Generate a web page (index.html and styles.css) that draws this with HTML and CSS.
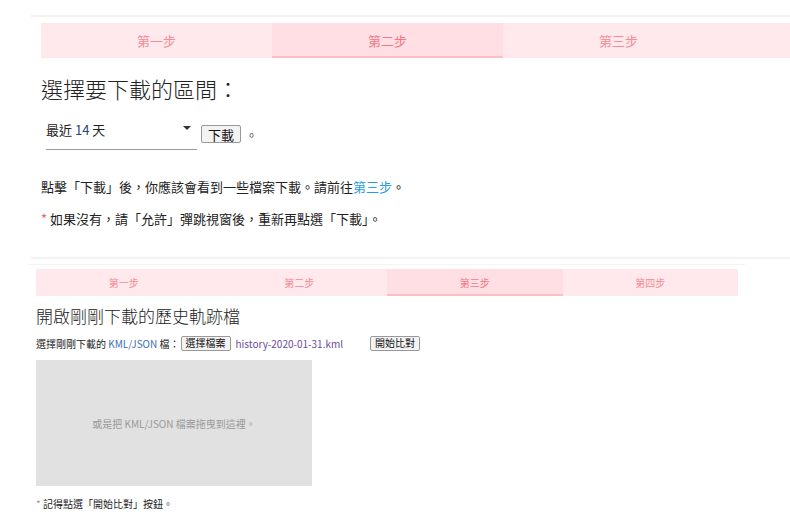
FILE: index.html
```html
<!DOCTYPE html>
<html lang="zh-Hant">
<head>
  <meta charset="UTF-8" />
  <meta name="viewport" content="width=device-width, initial-scale=1.0"/>
  <title>下載歷史軌跡</title>
  <link rel="stylesheet" href="styles.css">
</head>
<body>
  <!-- Step 2: download -->
  <div class="panel">
    <div class="panel-inner">
      <ul class="steps">
        <li>第一步</li>
        <li class="active">第二步</li>
        <li>第三步</li>
      </ul>

      <h2>選擇要下載的區間：</h2>

      <div class="range-row">
        <div class="range-select">
          <span>最近 <span class="num">14</span> 天</span>
          <span class="caret"></span>
        </div>
        <button class="btn">下載</button>
        <span class="dot">。</span>
      </div>

      <p class="note">點擊「下載」後，你應該會看到一些檔案下載。請前往<a href="#">第三步</a>。</p>
      <p class="note"><span class="star">*</span> 如果沒有，請「允許」彈跳視窗後，重新再點選「下載」。</p>
    </div>
  </div>

  <!-- Step 3: compare -->
  <div class="panel small">
    <div class="sub-line"></div>
    <div class="panel-inner">
      <ul class="steps four">
        <li>第一步</li>
        <li>第二步</li>
        <li class="active">第三步</li>
        <li>第四步</li>
      </ul>

      <h3>開啟剛剛下載的歷史軌跡檔</h3>

      <div class="file-row">
        <span>選擇剛剛下載的 <span class="fmt">KML/JSON</span> 檔：</span>
        <button class="btn sm">選擇檔案</button>
        <span class="filename">history-2020-01-31.kml</span>
        <button class="btn sm compare">開始比對</button>
      </div>

      <div class="dropzone">或是把 KML/JSON 檔案拖曳到這裡。</div>

      <p class="note sm"><span class="star grey">*</span> 記得點選「開始比對」按鈕。</p>
    </div>
  </div>
</body>
</html>
```

FILE: styles.css
```css
body {
  margin: 0;
  font-family: "Noto Sans CJK TC", "Noto Sans", sans-serif;
  color: #222;
  overflow: hidden;
}

.panel {
  margin-top: 15px;
  margin-left: 31px;
  border-top: 2px solid #f3f3f3;
}

.panel-inner {
  padding: 6px 0 0 10px;
}

.steps {
  list-style: none;
  margin: 0;
  padding: 0;
  display: flex;
  width: 770px;
  height: 35px;
  background: #ffe9ec;
}

.steps li {
  width: 30%;
  flex: none;
  text-align: center;
  line-height: 35px;
  font-size: 13px;
  color: #f78a94;
  box-sizing: border-box;
}

.steps li.active {
  background: #ffdfe3;
  border-bottom: 2px solid #fcbfc4;
  color: #f37884;
}

h2 {
  font-size: 22px;
  font-weight: 300;
  margin: 13px 0 0;
  line-height: 34px;
  color: #222;
}

.range-row {
  display: flex;
  align-items: center;
  margin-top: 13px;
  height: 32px;
}

.range-select {
  width: 151px;
  margin-left: 5px;
  height: 31px;
  padding-top: 3px;
  box-sizing: border-box;
  border-bottom: 1px solid #999;
  font-size: 13px;
  line-height: 18px;
  display: flex;
  justify-content: space-between;
  align-items: flex-start;
  align-self: flex-start;
  height: 32px;
}

.range-select .num {
  color: #24427a;
}

.caret {
  width: 0;
  height: 0;
  border-left: 4px solid transparent;
  border-right: 4px solid transparent;
  border-top: 4px solid #333;
  margin-right: 6px;
  margin-top: 5px;
}

.btn {
  font-family: inherit;
  font-size: 13px;
  line-height: 15px;
  padding: 0 6px;
  margin-left: 4px;
  height: 18px;
  background: #f3f3f3;
  border: 1px solid #999;
  border-radius: 2px;
  color: #111;
}

.dot {
  font-size: 13px;
  margin-left: 4px;
  color: #555;
}

.note {
  font-size: 13px;
  margin: 27px 0 0;
  line-height: 20px;
}

.note + .note {
  margin-top: 12px;
}

.note a {
  color: #2b9be0;
  text-decoration: none;
}

.star {
  color: #e8626e;
}

.star.grey {
  color: #999;
}

/* second panel is drawn at a smaller scale */
.panel.small {
  margin-top: 28px;
  margin-left: 31px;
  border-top: 2px solid #f3f3f3;
}

.sub-line {
  margin-top: 5px;
  margin-left: -3px;
  width: 717px;
  border-top: 1px solid #f4f4f4;
}

.panel.small .panel-inner {
  padding: 4px 0 0 5px;
}

.steps.four {
  width: 702px;
  height: 27px;
}

.steps.four li {
  width: 25%;
  line-height: 27px;
  font-size: 10px;
}

h3 {
  font-size: 17px;
  font-weight: 300;
  margin: 8px 0 0;
  line-height: 24px;
  color: #222;
}

.file-row {
  display: flex;
  align-items: center;
  font-size: 10px;
  margin-top: 6px;
  height: 18px;
}

.fmt {
  color: #3b6fb5;
}

.btn.sm {
  font-size: 10px;
  height: 15px;
  line-height: 12px;
  padding: 0 4px;
  margin-left: 1px;
}

.filename {
  color: #6b4c9a;
  margin-left: 5px;
}

.btn.compare {
  margin-left: 27px;
}

.dropzone {
  width: 276px;
  height: 126px;
  margin-top: 8px;
  background: #e1e1e1;
  color: #999;
  font-size: 10px;
  display: flex;
  align-items: center;
  justify-content: center;
}

.note.sm {
  font-size: 10px;
  margin-top: 10px;
  line-height: 16px;
}
```
